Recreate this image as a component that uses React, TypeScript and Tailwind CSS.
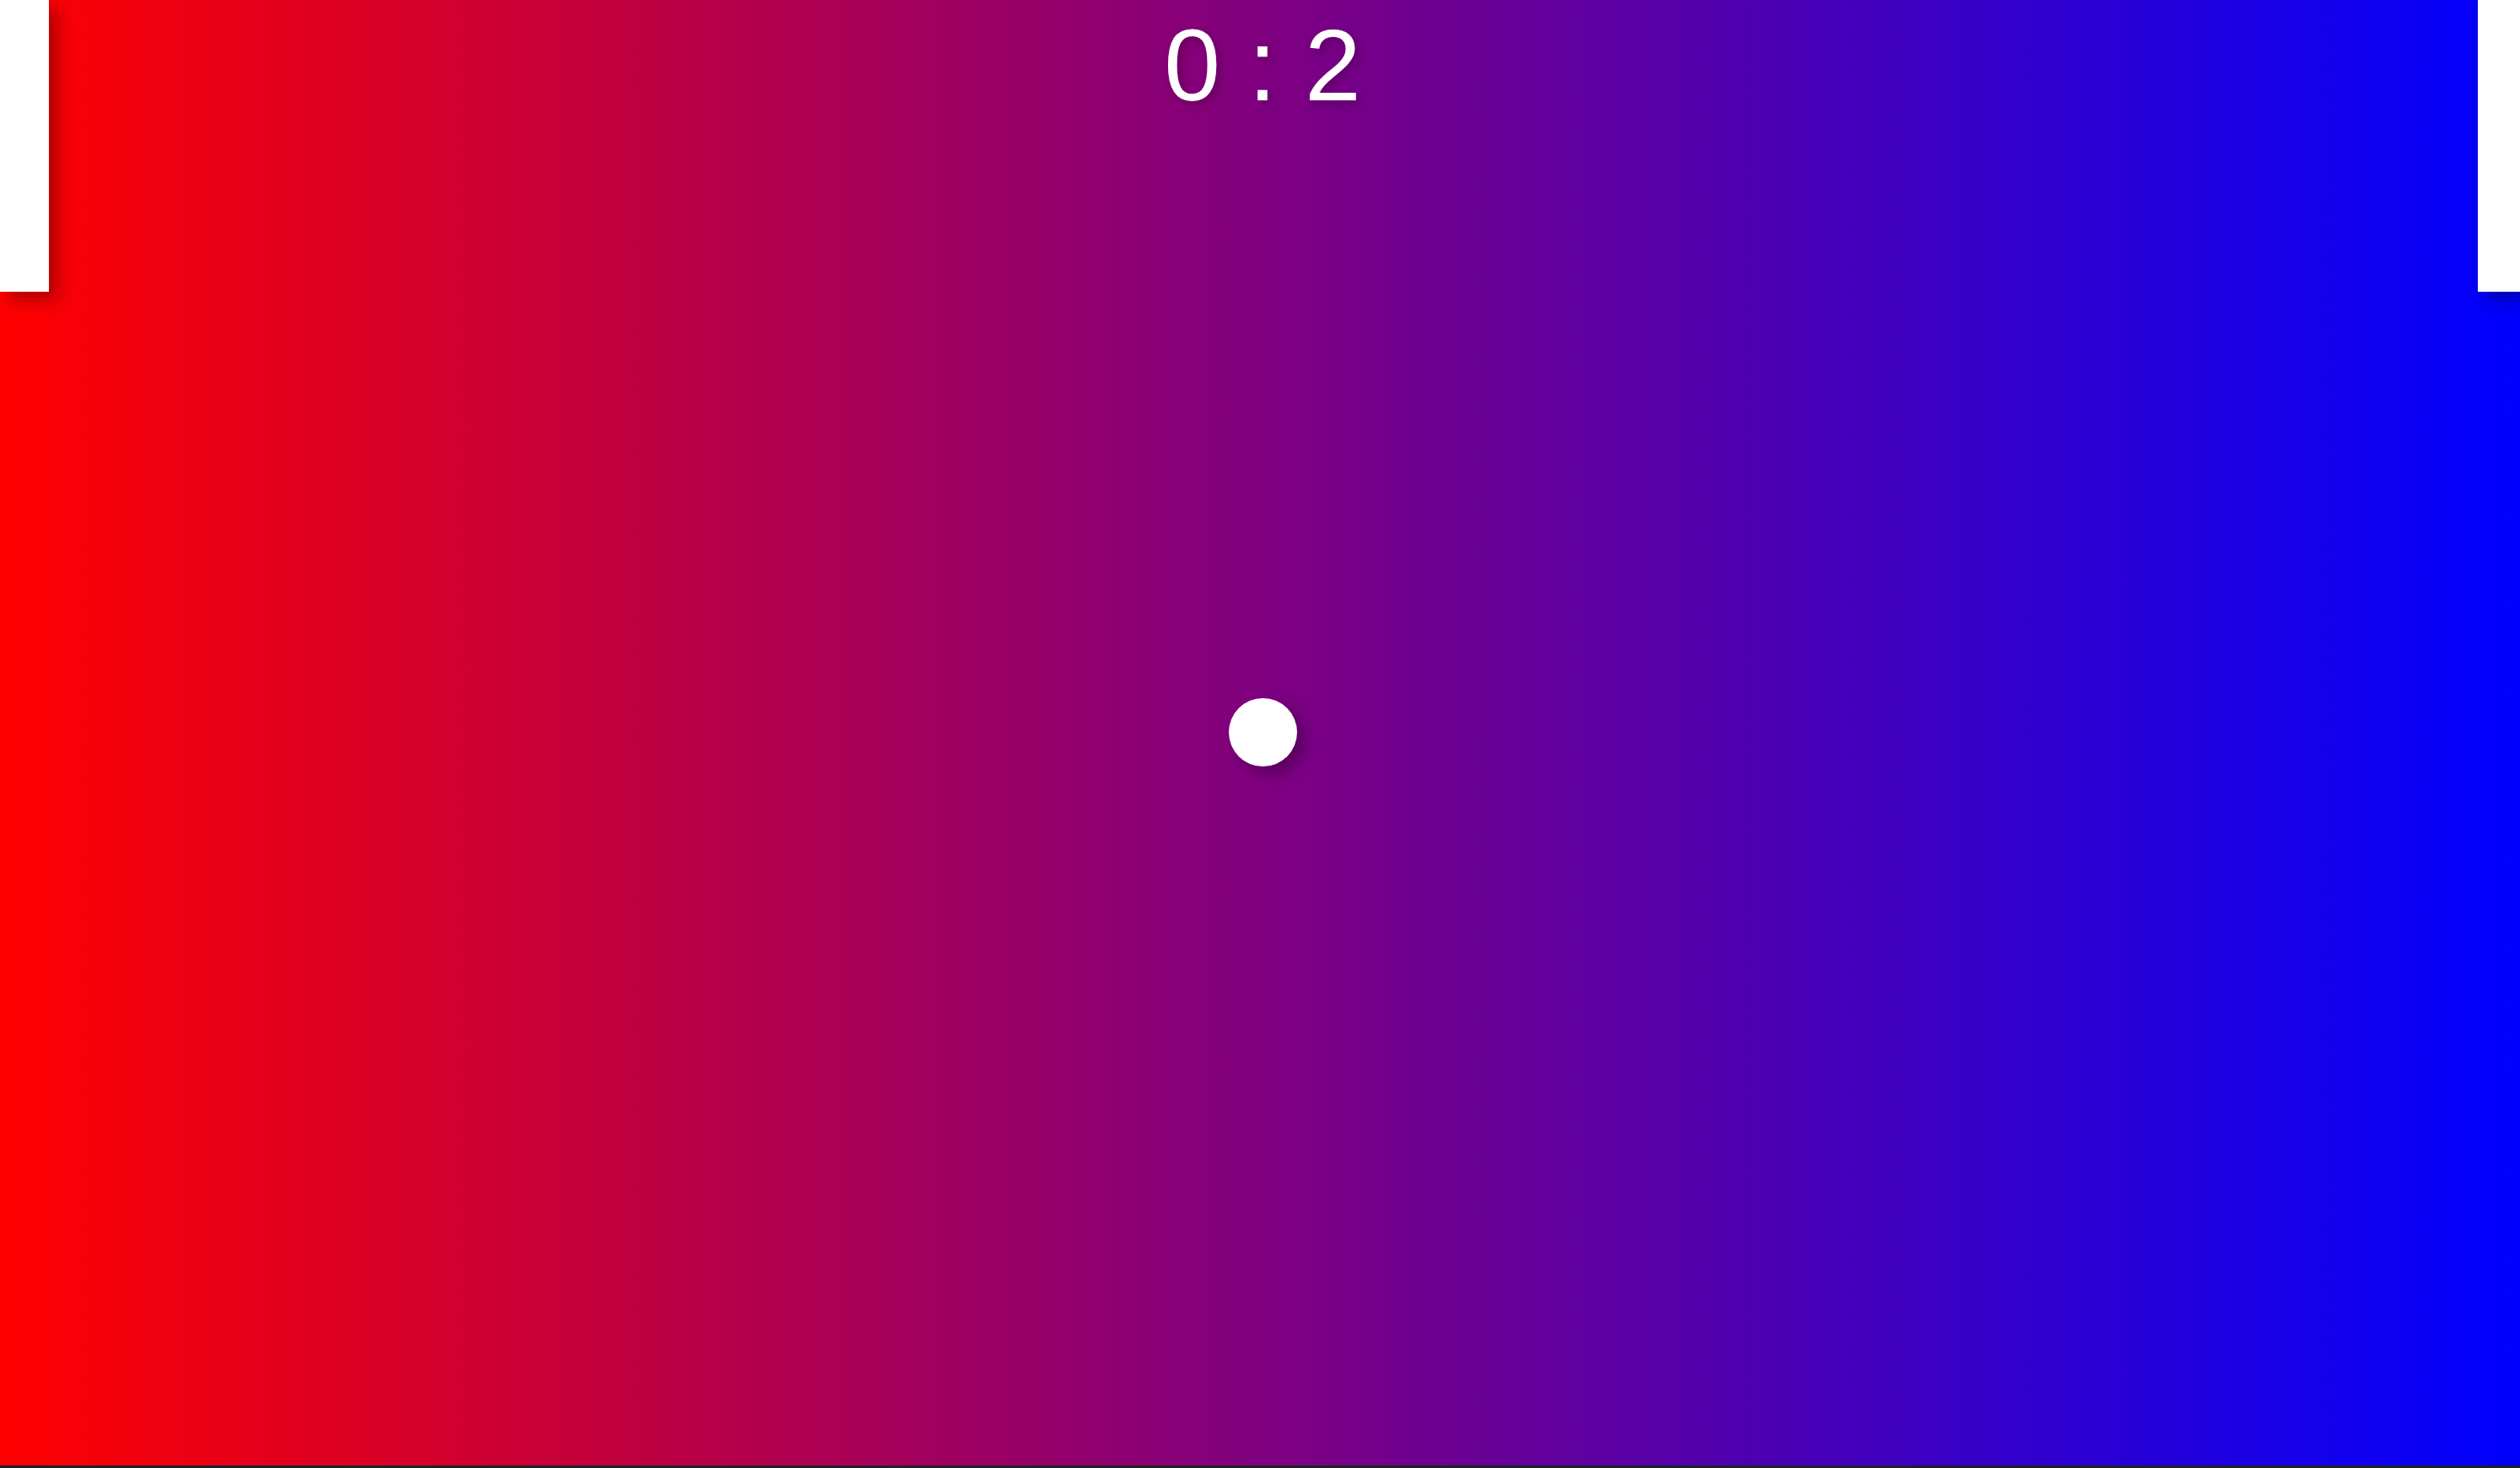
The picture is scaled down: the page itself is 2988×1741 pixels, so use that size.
import React from 'react';

const Paddle: React.FC<{ side: 'left' | 'right' }> = ({ side }) => (
  <div
    className={
      side === 'left'
        ? 'absolute left-0 top-0 w-[58px] h-[346px] bg-white shadow-[10px_10px_20px_rgba(0,0,0,0.3)]'
        : 'absolute right-0 top-0 w-[50px] h-[346px] bg-white shadow-[10px_10px_20px_rgba(0,0,0,0.3)]'
    }
  />
);

const App: React.FC = () => {
  return (
    <div className="w-[2988px] h-[1741px] bg-[#1e2227] overflow-hidden">
      <div className="relative w-full h-[1738px] bg-[linear-gradient(to_right,#ff0000,#0000ff)]">
        <Paddle side="left" />
        <Paddle side="right" />

        {/* score */}
        <div className="absolute left-[1380px] top-[17px] w-[234px] text-center text-white text-[120px] leading-none font-['Liberation_Sans',Arial,sans-serif] whitespace-pre [text-shadow:4px_4px_12px_rgba(0,0,0,0.25)]">
          0 : 2
        </div>

        {/* ball */}
        <div className="absolute left-[1457px] top-[828px] w-[81px] h-[81px] rounded-full bg-white shadow-[8px_8px_18px_rgba(0,0,0,0.3)]" />
      </div>
    </div>
  );
};

export default App;
